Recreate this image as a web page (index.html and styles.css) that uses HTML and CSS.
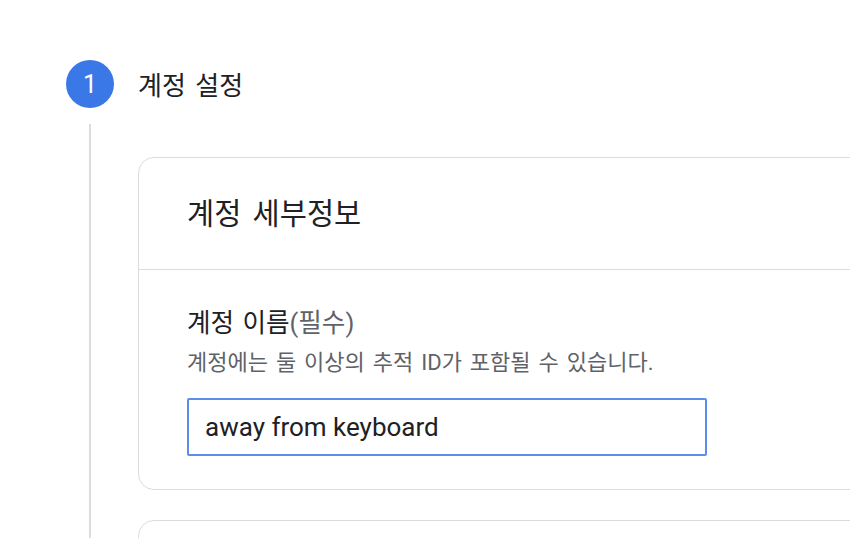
FILE: index.html
```html
<!DOCTYPE html>
<html lang="ko">
<head>
<meta charset="utf-8">
<title>계정 설정</title>
<link rel="stylesheet" href="styles.css">
</head>
<body>
<div class="page">
  <div class="step-head">
    <div class="step-num">1</div>
    <div class="step-title">계정 설정</div>
  </div>
  <div class="step-body">
    <div class="rail"><div class="rail-line"></div></div>
    <div class="step-content">
      <section class="card">
        <div class="card-head">계정 세부정보</div>
        <div class="card-body">
          <div class="label">계정 이름<span class="req">(필수)</span></div>
          <div class="desc">계정에는 둘 이상의 추적 ID가 포함될 수 있습니다.</div>
          <input class="field" type="text" value="away from keyboard">
        </div>
      </section>
      <section class="card card-next"></section>
    </div>
  </div>
</div>
</body>
</html>
```
FILE: styles.css
```css
html, body {
  margin: 0;
  background: #ffffff;
  overflow: hidden;
}
body {
  font-family: "Roboto", "Noto Sans CJK KR", sans-serif;
  color: #202124;
}
.page {
  padding: 60px 0 0 66px;
}
.step-head {
  display: flex;
  align-items: center;
  gap: 24px;
}
.step-num {
  width: 48px;
  height: 48px;
  border-radius: 50%;
  background: #3b78e7;
  color: #ffffff;
  font-size: 25px;
  display: flex;
  align-items: center;
  justify-content: center;
  flex-shrink: 0;
}
.step-title {
  font-size: 26px;
  line-height: 32px;
  word-spacing: 3px;
  padding-top: 4px;
}
.step-body {
  display: flex;
  margin-top: 16px;
}
.rail {
  width: 48px;
  flex-shrink: 0;
  display: flex;
  justify-content: center;
}
.rail-line {
  width: 2px;
  background: #dadce0;
  min-height: 500px;
}
.step-content {
  margin-left: 24px;
  padding-top: 33px;
  display: flex;
  flex-direction: column;
  gap: 30px;
}
.card {
  width: 780px;
  border: 1px solid #dadce0;
  border-radius: 16px;
  flex-shrink: 0;
}
.card-head {
  height: 112px;
  box-sizing: border-box;
  padding: 0 48px 5px;
  display: flex;
  align-items: center;
  font-size: 29.5px;
  word-spacing: 4px;
  border-bottom: 1px solid #dadce0;
}
.card-body {
  padding: 37px 48px 33px;
}
.label {
  font-size: 25.6px;
  line-height: 32px;
  word-spacing: 2px;
}
.req {
  color: #5f6368;
}
.desc {
  margin-top: 10px;
  font-size: 22px;
  line-height: 28px;
  word-spacing: 2.5px;
  color: #5f6368;
}
.field {
  display: block;
  box-sizing: border-box;
  margin-top: 21px;
  width: 520px;
  height: 58px;
  padding: 0 16px;
  border: 2px solid #5b8def;
  border-radius: 2px;
  outline: none;
  font-family: "Roboto", "Noto Sans CJK KR", sans-serif;
  font-size: 26px;
  color: #202124;
  background: #ffffff;
}
.card-next {
  height: 200px;
}
```
